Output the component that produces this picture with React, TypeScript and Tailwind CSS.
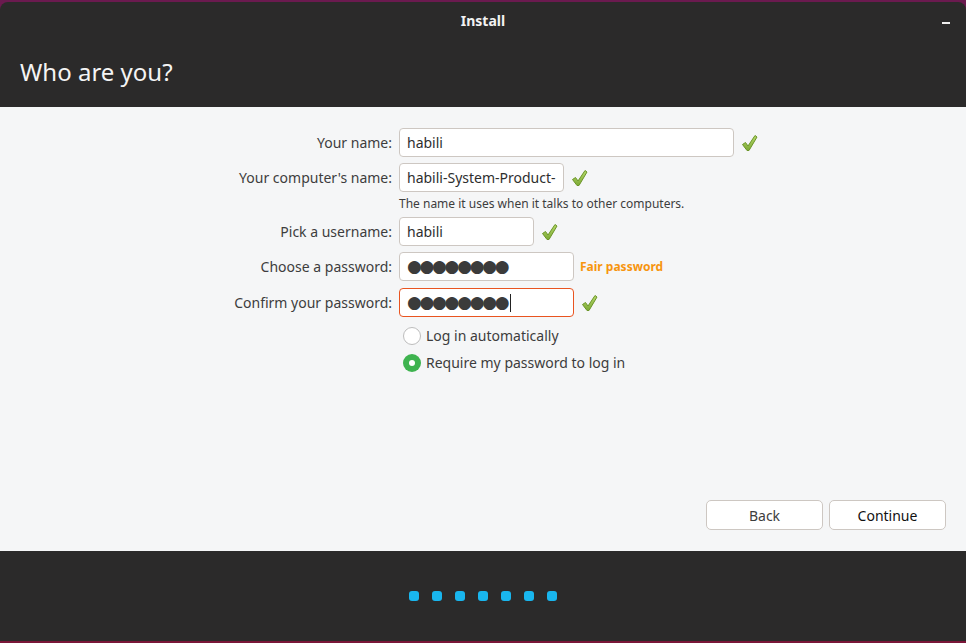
import React from "react";

const font = { fontFamily: '"Noto Sans", "Open Sans", sans-serif' };

function Check() {
  return (
    <svg width="17" height="18" viewBox="0 0 17 18" className="shrink-0">
      <defs>
        <linearGradient id="cg" x1="0" y1="0" x2="0" y2="1">
          <stop offset="0" stopColor="#b6d96a" />
          <stop offset="1" stopColor="#7ca935" />
        </linearGradient>
      </defs>
      <path
        d="M1.5 10.5 L4.5 8.5 L7 12 L14 1.5 L16 3 L8 16.5 L6 16.5 Z"
        fill="url(#cg)"
        stroke="#6b9528"
        strokeWidth="1"
        strokeLinejoin="round"
      />
    </svg>
  );
}

function Row({
  label,
  children,
}: {
  label: string;
  children: React.ReactNode;
}) {
  return (
    <div className="flex items-center">
      <div className="w-[392px] pr-0 text-right text-[14px] text-[#3d3d3d]">{label}</div>
      <div className="ml-[7px] flex items-center">{children}</div>
    </div>
  );
}

function Input({
  w,
  children,
  focused,
}: {
  w: string;
  children: React.ReactNode;
  focused?: boolean;
}) {
  return (
    <div
      className={`${w} flex h-[29px] items-center overflow-hidden whitespace-nowrap rounded-[4px] border bg-white px-[7px] text-[14px] text-[#2e2e2e] ${
        focused ? "border-[#e95420]" : "border-[#cdc7c2]"
      }`}
    >
      {children}
    </div>
  );
}

function Dots({ caret }: { caret?: boolean }) {
  return (
    <span className="flex items-center text-[#3b3b3b]" style={{ fontFamily: '"DejaVu Sans", sans-serif' }}>
      <span className="text-[17px] leading-none tracking-[-2.3px]">●●●●●●●●</span>
      {caret && <span className="ml-[3px] inline-block h-[18px] w-px bg-[#222]" />}
    </span>
  );
}

export default function App() {
  return (
    <div className="h-[643px] w-[966px] bg-[#6b1a4f] pt-[2px]" style={font}>
      <div className="flex h-[639px] flex-col overflow-hidden rounded-t-[8px] bg-[#2b2a2a]">
        {/* header */}
        <div className="flex h-[105px] flex-col">
          <div className="relative flex h-[37px] items-center justify-center">
            <span className="text-[14px] font-bold text-[#f2f2f2]">Install</span>
            <span className="absolute right-[16px] top-[20px] h-[1.5px] w-[8px] bg-[#eeeeee]" />
          </div>
          <div className="pl-[20px] pt-[21px] text-[24px] leading-none text-[#f4f4f4]">Who are you?</div>
        </div>
        {/* content */}
        <div className="flex h-[444px] flex-col bg-[#f5f6f7] pt-[21px]">
          <div className="flex flex-col">
            <Row label="Your name:">
              <Input w="w-[335px]">habili</Input>
              <span className="ml-[7px]">
                <Check />
              </span>
            </Row>
            <div className="mt-[6px]">
              <Row label="Your computer's name:">
                <Input w="w-[165px]">
                  <span>habili-System-Product-</span>
                </Input>
                <span className="ml-[7px]">
                  <Check />
                </span>
              </Row>
            </div>
            <div className="ml-[399px] mt-[3px] text-[12px] leading-[18px] text-[#3d3d3d]">
              The name it uses when it talks to other computers.
            </div>
            <div className="mt-[4px]">
              <Row label="Pick a username:">
                <Input w="w-[135px]">habili</Input>
                <span className="ml-[7px]">
                  <Check />
                </span>
              </Row>
            </div>
            <div className="mt-[6px]">
              <Row label="Choose a password:">
                <Input w="w-[175px]">
                  <Dots />
                </Input>
                <span className="ml-[6px] text-[12px] font-bold text-[#f7950f]">Fair password</span>
              </Row>
            </div>
            <div className="mt-[7px]">
              <Row label="Confirm your password:">
                <Input w="w-[175px]" focused>
                  <Dots caret />
                </Input>
                <span className="ml-[7px]">
                  <Check />
                </span>
              </Row>
            </div>
            <div className="ml-[403px] mt-[8px] flex flex-col gap-[6px]">
              <div className="flex items-center gap-[5px]">
                <span className="h-[18px] w-[18px] rounded-full border border-[#bdbdbd] bg-white" />
                <span className="text-[14px] text-[#3d3d3d]">Log in automatically</span>
              </div>
              <div className="flex items-center gap-[5px]">
                <span className="flex h-[18px] w-[18px] items-center justify-center rounded-full bg-[#3eb34f]">
                  <span className="h-[6px] w-[6px] rounded-full bg-white" />
                </span>
                <span className="text-[14px] text-[#3d3d3d]">Require my password to log in</span>
              </div>
            </div>
          </div>
          <div className="mt-auto flex justify-end gap-[6px] pb-[21px] pr-[20px]">
            <button className="h-[30px] w-[117px] rounded-[5px] border border-[#cdc7c2] bg-white text-[14px] text-[#3d3d3d]">
              Back
            </button>
            <button className="h-[30px] w-[117px] rounded-[5px] border border-[#cdc7c2] bg-white text-[14px] text-[#111]">
              Continue
            </button>
          </div>
        </div>
        {/* footer */}
        <div className="flex flex-1 items-center justify-center gap-[13px]">
          {[0, 1, 2, 3, 4, 5, 6].map((i) => (
            <span key={i} className="h-[10px] w-[10px] rounded-[3px] bg-[#19b6ee]" />
          ))}
        </div>
      </div>
      <div className="h-[2px] bg-[#7a1638]" />
    </div>
  );
}
